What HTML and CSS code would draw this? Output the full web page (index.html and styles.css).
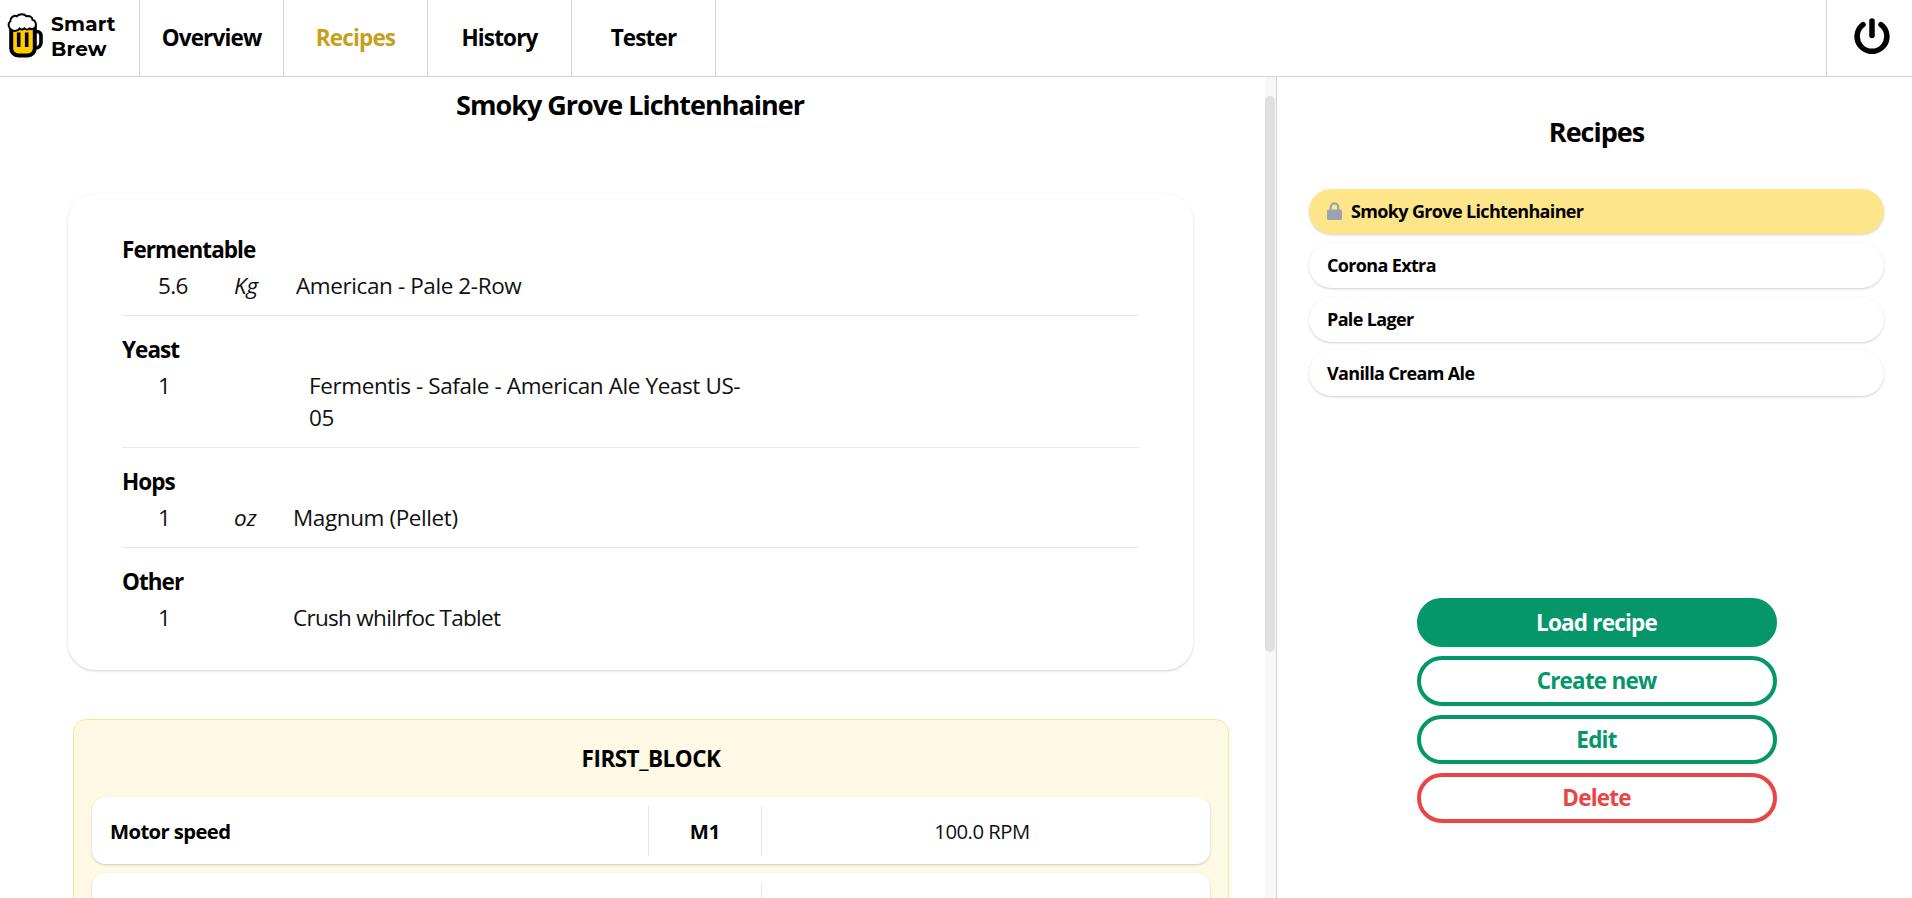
FILE: index.html
```html
<!DOCTYPE html>
<html lang="en">
<head>
<meta charset="utf-8">
<title>Smart Brew</title>
<link rel="stylesheet" href="styles.css">
</head>
<body>
<header class="topbar">
  <div class="brand">
    <svg class="brand-icon" viewBox="0 0 36 45" width="36" height="45">
      <path d="M27.500 18.500h2.500a4 4 0 0 1 4 4v7a5.500 5.500 0 0 1-5.500 5.500h-1" fill="none" stroke="#000" stroke-width="3.600"/>
      <path d="M4.200 14v21.500a7 7 0 0 0 7 7h9.600a7 7 0 0 0 7-7V14z" fill="#fc0" stroke="#000" stroke-width="4"/>
      <path d="M11.700 19.500V34M19.700 19.500V34" stroke="#000" stroke-width="3.600"/>
      <path d="M4.500 16.800C1.200 15 .600 10.500 3.300 8.300 3 4.500 7 2 10 3.200 12.300.600 17.500.500 19.300 3.200c3-.900 6.200 1 6.200 3.600 3.300.900 4.300 4.700 2.700 7.300-1.500 2-3.700 2.500-5.700 1.400-1.500 1.300-3.700 1.300-5-.100-1.700 1.300-3.600 1.200-5 0-1.600 2.600-5.800 3.300-8 1.400z" fill="#fff" stroke="#000" stroke-width="2"/>
    </svg>
    <span class="brand-name">Smart<br>Brew</span>
  </div>
  <nav class="nav">
    <a class="nav-item">Overview</a>
    <a class="nav-item active">Recipes</a>
    <a class="nav-item">History</a>
    <a class="nav-item">Tester</a>
  </nav>
  <div class="power">
    <svg viewBox="0 0 36 36" width="36" height="36" fill="none" stroke="#000" stroke-width="5.500" stroke-linecap="round">
      <path d="M9 6.600a14.900 14.900 0 1 0 18 0M18 3v14.500"/>
    </svg>
  </div>
</header>
<div class="content">
  <main class="recipe">
    <h1 class="recipe-title">Smoky Grove Lichtenhainer</h1>
    <section class="ingredients">
      <div class="group">
        <h2 class="group-title">Fermentable</h2>
        <div class="item"><span class="qty">5.6</span><i class="unit">Kg</i><span class="name name-grain">American - Pale 2-Row</span></div>
      </div>
      <div class="group">
        <h2 class="group-title">Yeast</h2>
        <div class="item"><span class="qty">1</span><i class="unit"></i><span class="name name-yeast">Fermentis - Safale - American Ale Yeast US-<br>05</span></div>
      </div>
      <div class="group">
        <h2 class="group-title">Hops</h2>
        <div class="item"><span class="qty">1</span><i class="unit">oz</i><span class="name">Magnum (Pellet)</span></div>
      </div>
      <div class="group">
        <h2 class="group-title">Other</h2>
        <div class="item"><span class="qty">1</span><i class="unit"></i><span class="name name-other">Crush whilrfoc Tablet</span></div>
      </div>
    </section>
    <section class="block">
      <h2 class="block-title">FIRST_BLOCK</h2>
      <div class="step">
        <span class="step-name">Motor speed</span>
        <span class="step-id">M1</span>
        <span class="step-value">100.0 RPM</span>
      </div>
      <div class="step step-wide">
        <span class="step-name"></span>
        <span class="step-value"></span>
      </div>
    </section>
  </main>
  <div class="scrollbar"><div class="thumb"></div></div>
  <aside class="sidebar">
    <h2 class="sidebar-title">Recipes</h2>
    <ul class="list">
      <li class="pill selected">
        <svg class="lock" viewBox="0 0 15 18" width="15" height="18"><path d="M3.700 8V5.200a3.800 3.800 0 0 1 7.600 0V8" fill="none" stroke="#9ca3af" stroke-width="2.200"/><rect y="7.500" width="15" height="10.500" rx="1.500" fill="#9ca3af"/></svg>
        <span>Smoky Grove Lichtenhainer</span>
      </li>
      <li class="pill">Corona Extra</li>
      <li class="pill">Pale Lager</li>
      <li class="pill">Vanilla Cream Ale</li>
    </ul>
    <div class="actions">
      <button class="btn btn-primary">Load recipe</button>
      <button class="btn">Create new</button>
      <button class="btn">Edit</button>
      <button class="btn btn-danger">Delete</button>
    </div>
  </aside>
</div>
</body>
</html>
```

FILE: styles.css
```css
html { font-size: 18px; }
* { box-sizing: border-box; }
body {
  margin: 0;
  height: 898px;
  overflow: hidden;
  display: flex;
  flex-direction: column;
  background: #fff;
  color: #000;
  font-family: "Segoe UI", "Open Sans", "Noto Sans", sans-serif;
}
h1, h2, ul { margin: 0; padding: 0; }
ul { list-style: none; }

.topbar { display: flex; height: 77px; flex: none; border-bottom: 1px solid #d1d5db; }
.brand { display: flex; width: 140px; padding: 13px 0 0 7px; border-right: 1px solid #d1d5db; }
.brand-icon { flex: none; }
.brand-name {
  margin: -1px 0 0 8px;
  font: 700 20px/25px Montserrat, Inter, sans-serif;
  letter-spacing: 0.2px;
}
.nav { display: flex; flex: 1; }
.nav-item {
  display: flex;
  width: 144px;
  align-items: center;
  justify-content: center;
  padding-bottom: 2px;
  border-right: 1px solid #d1d5db;
  font-size: 22.5px;
  font-weight: 700;
  letter-spacing: -0.85px;
}
.nav-item.active { color: #c4a01c; }
.power {
  display: flex;
  width: 86px;
  align-items: flex-start;
  justify-content: center;
  padding: 18px 0 0 5px;
  border-left: 1px solid #d1d5db;
}

.content { display: flex; flex: 1; min-height: 0; }
.recipe { width: 1265px; flex: none; overflow: hidden; }
.recipe-title {
  padding: 10px 0 1px;
  width: 1260px;
  text-align: center;
  font-size: 27px;
  line-height: 36px;
  font-weight: 700;
  letter-spacing: -1px;
}
.ingredients {
  width: 1125px;
  height: 476px;
  margin: 70px 0 0 68px;
  padding: 22px 54px 0;
  border-radius: 27px;
  box-shadow: 0 1px 3px rgba(0,0,0,.1), 0 1px 2px rgba(0,0,0,.1);
}
.group { padding: 18px 0 13.5px; border-bottom: 1px solid #e5e7eb; }
.group:last-child { border-bottom: 0; }
.group-title { font-size: 22.5px; line-height: 31.5px; font-weight: 700; letter-spacing: -0.95px; }
.item {
  display: flex;
  margin-top: 4.5px;
  padding-left: 36px;
  font-size: 22.5px;
  line-height: 31.5px;
  color: #111;
}
.qty { width: 76px; letter-spacing: -0.6px; }
.unit { width: 59px; }
.name { white-space: nowrap; letter-spacing: -0.4px; }
.name-grain { padding-left: 3px; }
.name-yeast { padding-left: 16px; }
.name-other { letter-spacing: -0.7px; }

.block {
  width: 1156px;
  height: 300px;
  margin: 49px 0 0 73px;
  padding: 23px 18px 0 18px;
  border: 1px solid #f3e78f;
  border-radius: 13.5px;
  background: #fef9e5;
}
.block-title { font-size: 22.5px; line-height: 31.5px; font-weight: 700; text-align: center; letter-spacing: -0.5px; }
.step {
  display: grid;
  grid-template-columns: 557px 113px 1fr;
  height: 67px;
  margin-top: 9px;
  padding: 9px 0 8px;
  border-radius: 13.5px;
  background: #fff;
  box-shadow: 0 1px 3px rgba(0,0,0,.1), 0 1px 2px rgba(0,0,0,.1);
  font-size: 20.25px;
}
.step-wide { grid-template-columns: 670px 1fr; }
.block-title + .step { margin-top: 22px; }
.step > span { display: flex; align-items: center; justify-content: center; border-right: 1px solid #e5e7eb; }
.step > .step-name { justify-content: flex-start; padding-left: 18px; font-weight: 700; letter-spacing: -0.6px; }
.step > .step-id { font-weight: 700; }
.step > .step-value { border: 0; padding-right: 8px; letter-spacing: -0.5px; color: #111; }

.scrollbar { width: 11px; flex: none; padding: 19px 1px 0 0; background: #f8f8f8; }
.thumb { height: 556px; border-radius: 5px; background: #e0e0e0; }

.sidebar { flex: 1; padding: 37px 28px 0 32px; border-left: 1px solid #d1d5db; }
.sidebar-title { font-size: 27px; line-height: 36px; font-weight: 700; text-align: center; letter-spacing: -1px; }
.list { display: flex; flex-direction: column; gap: 9px; height: 447.6px; padding-top: 39px; }
.pill {
  display: flex;
  align-items: center;
  height: 45px;
  flex: none;
  padding: 0 18px 1px;
  gap: 9px;
  border-radius: 23px;
  box-shadow: 0 1px 3px rgba(0,0,0,.1), 0 1px 2px rgba(0,0,0,.1);
  font-size: 18px;
  font-weight: 700;
  letter-spacing: -0.65px;
}
.pill.selected { background: #fde68a; }
.actions { display: flex; flex-direction: column; align-items: center; gap: 9px; }
.btn {
  width: 360px;
  height: 49.5px;
  padding: 0;
  border: 4px solid #059669;
  border-radius: 25px;
  background: #fff;
  color: #059669;
  box-shadow: 0 1px 2px rgba(0,0,0,.08);
  font: 700 22.5px/31.5px "Segoe UI", "Open Sans", "Noto Sans", sans-serif;
  letter-spacing: -0.8px;
}
.btn-primary { background: #059669; color: #fff; }
.btn-danger { border-color: #e84646; color: #e84646; }
```
